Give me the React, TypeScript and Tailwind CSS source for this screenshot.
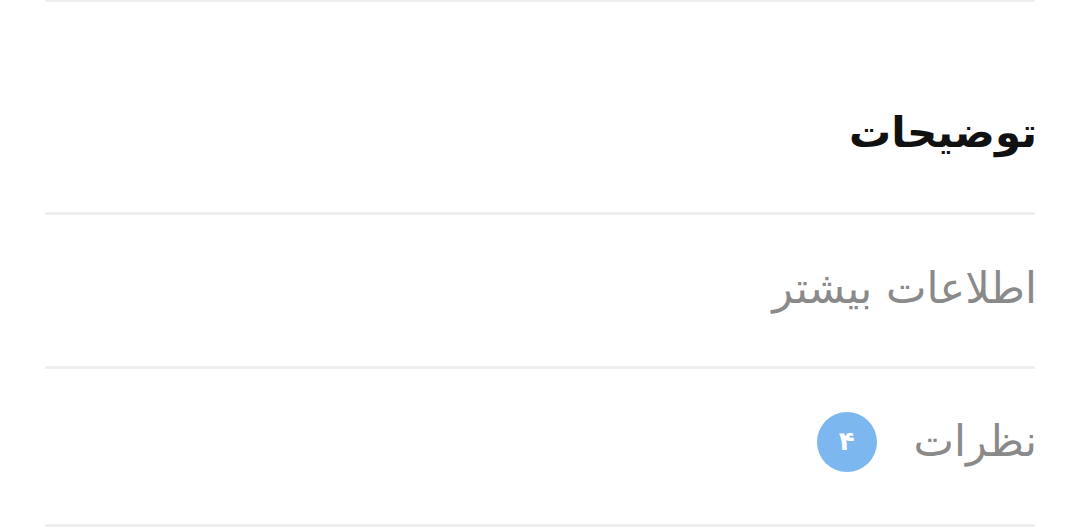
import React from "react";

type Row = { label: string; count?: string; height: string };

const rows: Row[] = [
  { label: "اطلاعات بیشتر", height: "h-[154px] pb-[4px]" },
  { label: "نظرات", count: "۴", height: "h-[158px] pb-[10px]" },
];

const App = () => {
  return (
    <div
      dir="rtl"
      className="w-[1080px] h-[528px] overflow-hidden bg-white px-[45px]"
      style={{ fontFamily: '"DejaVu Sans", "Noto Sans", sans-serif' }}
    >
      <div className="border-t-[3px] border-[#eeeeee] -mt-[1px]">
        {/* section title */}
        <div className="h-[210px] flex items-center pt-[52px]">
          <h2 className="text-[42px] font-bold text-[#111111] leading-none -mr-[2px]">توضیحات</h2>
        </div>

        {rows.map((row) => (
          <div
            key={row.label}
            className={`border-t-[3px] border-[#eeeeee] ${row.height} flex items-center gap-[37px]`}
          >
            <span className="text-[43px] text-[#8a8a8a] leading-none -mr-[2px]">{row.label}</span>
            {row.count && (
              <span className="w-[60px] h-[60px] rounded-full bg-[#7cb8ef] text-white text-[26px] font-bold flex items-center justify-center">
                {row.count}
              </span>
            )}
          </div>
        ))}
        <div className="border-t-[3px] border-[#eeeeee]" />
      </div>
    </div>
  );
};

export default App;
